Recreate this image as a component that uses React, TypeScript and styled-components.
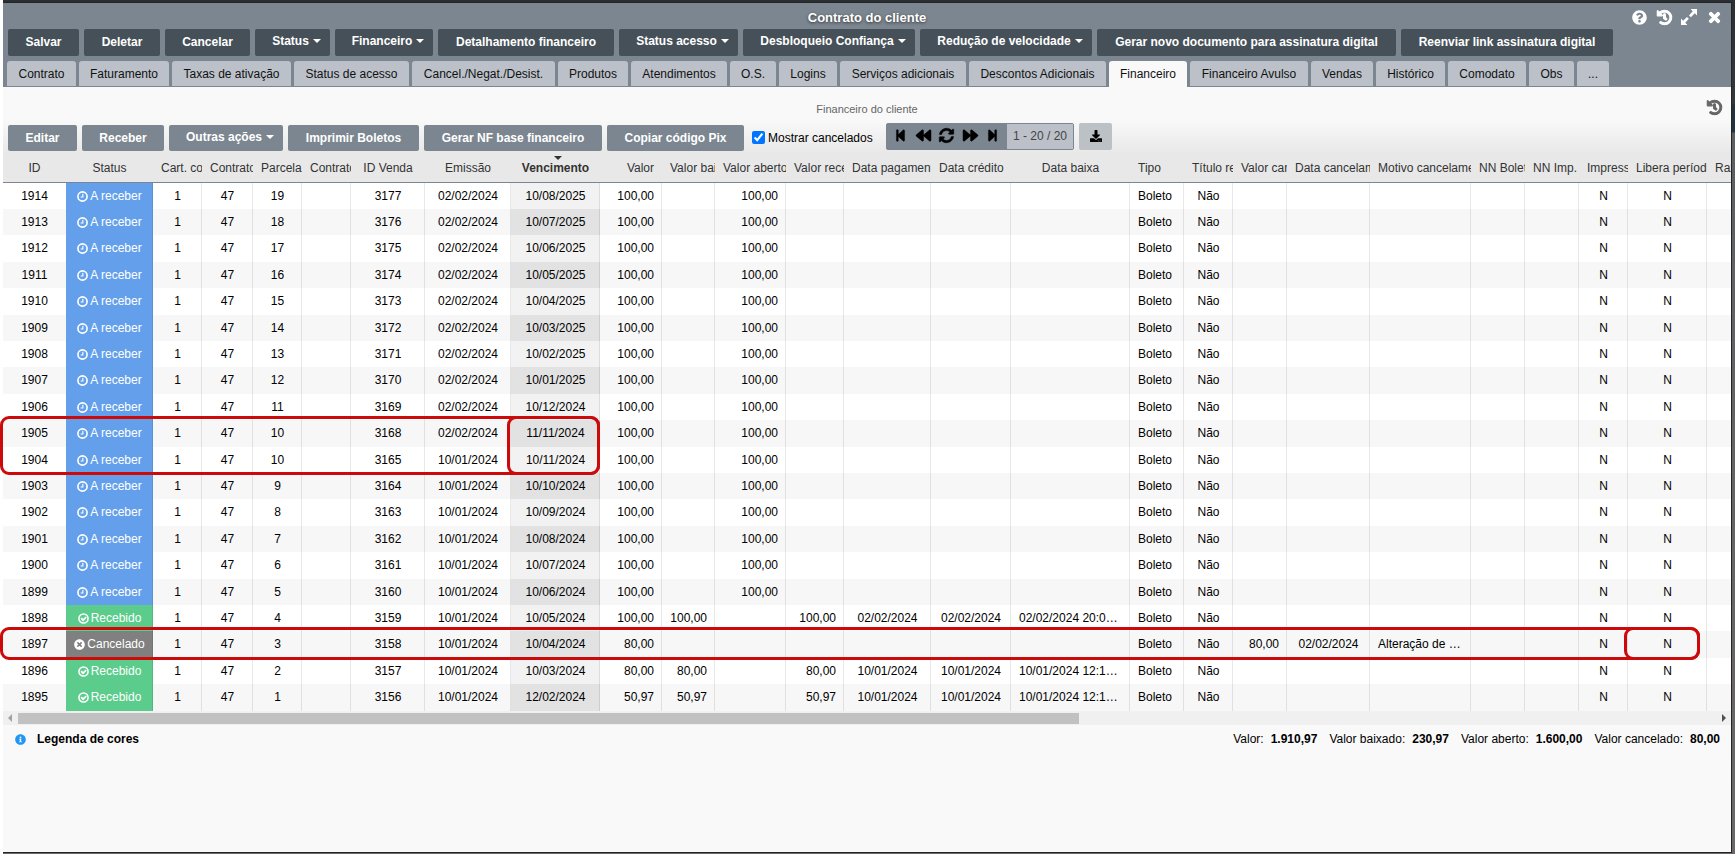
import React from "react";
import styled, { createGlobalStyle, css } from "styled-components";
import {
  FaQuestionCircle, FaHistory, FaTimes, FaStepBackward, FaBackward, FaSyncAlt,
  FaForward, FaStepForward, FaDownload, FaInfoCircle, FaTimesCircle,
} from "react-icons/fa";

const GlobalStyle = createGlobalStyle`
  * { box-sizing: border-box; }
  html, body, #root { height: 100%; }
  body {
    margin: 0;
    font: 12px/16px "Liberation Sans", Arial, sans-serif;
    color: #000;
  }
  button { font: inherit; border: 0; cursor: pointer; }
`;

const Desktop = styled.div`
  min-height: 100%;
  display: flex;
  border-left: 3px solid #fff;
  padding: 2px 3px 1px 0;
  background: linear-gradient(#2b2f32, #34383b 104px, #22333f 105px, #22333f 132px, #5c5f61 133px, #6a6866);
`;

const Win = styled.main`
  flex: 1;
  min-width: 0;
  display: flex;
  flex-direction: column;
  border: 1px solid #222426;
  border-left: 0;
  background: #f9f9f9;
`;

const WinHeader = styled.header`
  background: #7c8690;
`;

const TitleBar = styled.div`
  position: relative;
  height: 26px;
  padding-top: 2px;
  text-align: center;
`;

const Title = styled.h1`
  margin: 0;
  font-size: 13px;
  line-height: 25px;
  color: #fff;
  text-shadow: 0 1px 3px #333;
`;

const TitleTools = styled.div`
  position: absolute;
  top: 6px;
  right: 9px;
  display: flex;
  align-items: center;
  gap: 9px;
`;

const IconButton = styled.button`
  display: flex;
  padding: 0;
  background: none;
  color: inherit;
  font-size: 15px;
`;

const TitleIcon = styled(IconButton)<{ $heavy?: boolean }>`
  width: 16px;
  justify-content: center;
  color: #fff;
  ${(p) => p.$heavy && css`svg { overflow: visible; stroke: currentColor; stroke-width: 36; }`}
`;

const Actions = styled.div`
  display: flex;
  align-items: flex-start;
  gap: 5px;
  padding: 0 5px 5px;
`;

const ActionButton = styled.button<{ $w: number; $menu?: boolean; $light?: boolean }>`
  display: flex;
  flex: none;
  align-items: center;
  justify-content: center;
  gap: 4px;
  width: ${(p) => p.$w}px;
  height: ${(p) => (p.$light ? 26 : 27)}px;
  padding: 0 0 ${(p) => (p.$light ? 0 : 2) + (p.$menu ? 2 : 0)}px ${(p) => (p.$menu ? 8 : 0)}px;
  border-radius: 2px;
  background: ${(p) => (p.$light ? "#7c8690" : "#465059")};
  color: #fff;
  font-weight: bold;
  white-space: nowrap;
`;

const Caret = styled.span`
  border: 4px solid transparent;
  border-top-color: currentColor;
  border-bottom: 0;
`;

const Tabs = styled.nav`
  display: flex;
  gap: 3px;
  padding: 0 4px;
`;

const Tab = styled.button<{ $w: number; $active?: boolean }>`
  flex: none;
  width: ${(p) => p.$w}px;
  height: 26px;
  padding: 0;
  border-radius: 3px 3px 0 0;
  border-bottom: 1px solid ${(p) => (p.$active ? "#f9f9f9" : "#7c8690")};
  background: ${(p) => (p.$active ? "#f9f9f9" : "#bcc1c9")};
  color: #111;
  white-space: nowrap;
`;

const Panel = styled.section`
  display: flex;
  flex-direction: column;
`;

const PanelTop = styled.div`
  background: linear-gradient(#f9f9f9 32px, #e8e8e8 66px);
`;

const PanelTitle = styled.div`
  position: relative;
  height: 36px;
  padding-top: 14px;
  text-align: center;
`;

const PanelHeading = styled.h2`
  margin: 0;
  font-size: 11px;
  line-height: 16px;
  font-weight: normal;
  color: #666;
`;

const PanelHistory = styled(TitleIcon)`
  position: absolute;
  top: 13px;
  right: 9px;
  color: #666;
`;

const Toolbar = styled.div`
  display: flex;
  align-items: center;
  gap: 5px;
  height: 30px;
  padding: 0 5px;
`;

const CheckLabel = styled.label`
  display: flex;
  align-items: center;
  gap: 3px;
  width: 132px;
  padding: 0 0 1px 3px;
  input { width: 13px; height: 13px; margin: 0; accent-color: #0075ff; }
`;

const Pager = styled.div`
  display: flex;
  align-items: stretch;
  align-self: flex-start;
  width: 188px;
  height: 27px;
  border: 1px solid #7c8690;
  border-radius: 2px;
  background: #7c8690;
`;

const PagerButtons = styled.div`
  flex: 1;
  display: flex;
  align-items: center;
  justify-content: space-between;
  padding: 0 8px 2px 7px;
  svg { overflow: visible; stroke: currentColor; stroke-width: 16; }
`;

const StepButton = styled(IconButton)`
  font-size: 13px;
`;

const PagerCount = styled.span`
  width: 66px;
  background: #bcc1c9;
  color: #444;
  text-align: center;
  line-height: 25px;
`;

const DownloadButton = styled.button`
  display: flex;
  align-items: center;
  justify-content: center;
  align-self: flex-start;
  width: 33px;
  height: 27px;
  padding-bottom: 2px;
  border-radius: 2px;
  background: #bcc1c5;
`;

const Grid = styled.div`
  position: relative;
`;

const Viewport = styled.div`
  overflow: hidden;
`;

const Table = styled.table`
  width: 1781px;
  table-layout: fixed;
  border-collapse: separate;
  border-spacing: 0;
`;

const HeadCell = styled.th<{ $align: string; $sorted?: boolean }>`
  position: relative;
  height: 30px;
  padding: 0 8px;
  border-bottom: 1px solid #7c8690;
  background: #e8e8e8;
  overflow: hidden;
  white-space: nowrap;
  text-align: ${(p) => p.$align};
  font-weight: ${(p) => (p.$sorted ? "bold" : "normal")};
  color: #333;
`;

const SortMark = styled(Caret)`
  position: absolute;
  top: 3px;
  left: 48%;
`;

type Tone = "open" | "paid" | "cancelled";
const tones: Record<Tone, string> = { open: "#639fea", paid: "#5bcc8b", cancelled: "#808080" };

const Cell = styled.td<{ $align: string; $tone?: Tone; $sorted?: boolean; $plain?: boolean }>`
  padding: 5px 7px 0 8px;
  border-right: 1px solid rgba(0, 0, 0, ${(p) => (p.$plain ? 0 : 0.09)});
  overflow: hidden;
  text-overflow: ellipsis;
  vertical-align: top;
  white-space: nowrap;
  text-align: ${(p) => p.$align};
  ${(p) => p.$sorted && css`background: rgba(0, 0, 0, 0.05);`}
  ${(p) => p.$tone && css`background: ${tones[p.$tone]}; color: #fff;`}
`;

const Row = styled.tr`
  height: 26px;
  background: #fff;
  &:nth-child(5n + 3), &:nth-child(5n) { height: 27px; }
  &:nth-child(even) { background: #f7f7f7; }
  &:nth-child(even) ${Cell}[data-sorted] { background: #e2e2e2; }
`;

const StatusText = styled.span`
  display: flex;
  align-items: center;
  justify-content: center;
  gap: 2px;
  svg { flex: none; width: 11px; height: 11px; }
`;

const Scrollbar = styled.div`
  display: flex;
  align-items: center;
  height: 14px;
  padding: 0 5px;
  background: #f0f0f0;
`;

const ScrollArrow = styled.span<{ $dir: "left" | "right" }>`
  border: 4px solid transparent;
  ${(p) => p.$dir === "left"
    ? css`border-left: 0; border-right-color: #a3a3a3;`
    : css`border-right: 0; border-left-color: #505050;`}
`;

const ScrollTrack = styled.div`
  flex: 1;
  margin: 0 6px;
`;

const ScrollThumb = styled.div`
  width: 62.5%;
  height: 11px;
  background: #c1c1c1;
`;

const Highlight = styled.div<{ $x: number; $y: number; $w: number; $h: number }>`
  position: absolute;
  left: ${(p) => p.$x}px;
  top: ${(p) => p.$y}px;
  width: ${(p) => p.$w}px;
  height: ${(p) => p.$h}px;
  border: 3px solid #cd0a0a;
  border-radius: 9px;
  pointer-events: none;
`;

const Footer = styled.footer`
  display: flex;
  align-items: center;
  justify-content: space-between;
  padding: 6px 11px 0 12px;
`;

const Legend = styled.button`
  display: flex;
  align-items: center;
  gap: 11px;
  padding: 0;
  background: none;
  font-weight: bold;
  svg { color: #2196f3; font-size: 11px; }
`;

const Totals = styled.div`
  display: flex;
  gap: 12px;
`;

const Total = styled.span`
  display: flex;
  gap: 7px;
`;

const ClockIcon = () => (
  <svg viewBox="0 0 12 12" fill="none" stroke="currentColor" aria-hidden="true">
    <circle cx="6" cy="6" r="5" strokeWidth="1.8" />
    <path d="M6.4 3v3.6H4" strokeWidth="1.2" />
  </svg>
);

const CheckIcon = () => (
  <svg viewBox="0 0 12 12" fill="none" stroke="currentColor" aria-hidden="true">
    <circle cx="6" cy="6" r="5" strokeWidth="1.7" />
    <path d="M3.4 5.7l2.1 2.1 3.4-3.4" strokeWidth="1.9" />
  </svg>
);

const ExpandIcon = () => (
  <svg width="16" height="16" viewBox="0 0 15 15" fill="currentColor" aria-hidden="true">
    <path d="M9 0h6v6l-2-2-3.8 3.8-1.7-1.7L11 2z" />
    <path d="M6 15H0V9l2 2 3.6-3.6 1.8 1.8L4 13z" />
  </svg>
);

const actions: [string, number, boolean?][] = [
  ["Salvar", 71], ["Deletar", 76], ["Cancelar", 85], ["Status", 75, true],
  ["Financeiro", 98, true], ["Detalhamento financeiro", 176], ["Status acesso", 119, true],
  ["Desbloqueio Confiança", 172, true], ["Redução de velocidade", 172, true],
  ["Gerar novo documento para assinatura digital", 299], ["Reenviar link assinatura digital", 212],
];

const tabs: [string, number][] = [
  ["Contrato", 69], ["Faturamento", 90], ["Taxas de ativação", 119], ["Status de acesso", 115],
  ["Cancel./Negat./Desist.", 143], ["Produtos", 70], ["Atendimentos", 96], ["O.S.", 46],
  ["Logins", 58], ["Serviços adicionais", 126], ["Descontos Adicionais", 137], ["Financeiro", 78],
  ["Financeiro Avulso", 118], ["Vendas", 62], ["Histórico", 69], ["Comodato", 78], ["Obs", 45], ["...", 32],
];

const tools: [string, number, boolean?][] = [
  ["Editar", 69], ["Receber", 82], ["Outras ações", 114, true], ["Imprimir Boletos", 131],
  ["Gerar NF base financeiro", 178], ["Copiar código Pix", 137],
];

type Column = { label: string; w: number; align: "left" | "center" | "right" };
const col = (label: string, w: number, align: Column["align"] = "center"): Column => ({ label, w, align });

const columns: Column[] = [
  col("ID", 63), col("Status", 87), col("Cart. cobrança", 49), col("Contrato", 51), col("Parcela", 49),
  col("Contrato", 49), col("ID Venda", 74), col("Emissão", 86), col("Vencimento", 89),
  col("Valor", 62, "right"), col("Valor baixado", 53, "right"), col("Valor aberto", 71, "right"),
  col("Valor recebido", 58, "right"), col("Data pagamento", 87), col("Data crédito", 80),
  col("Data baixa", 119), col("Tipo", 54, "left"), col("Título renegociado", 49),
  col("Valor cancelado", 54, "right"), col("Data cancelamento", 83), col("Motivo cancelamento", 101, "left"),
  col("NN Boleto", 54), col("NN Imp.", 54), col("Impresso", 49), col("Libera período", 79), col("Razão", 77, "left"),
];
const SORTED = 8;

type Entry = {
  id: number; tone: Tone; parcela: number; venda: number; emissao: string; venc: string; valor: string;
  baixado?: string; aberto?: string; pago?: string; baixa?: string; cancelado?: string; dataCanc?: string; motivo?: string;
};

const open = (id: number, parcela: number, venda: number, emissao: string, venc: string): Entry =>
  ({ id, tone: "open", parcela, venda, emissao, venc, valor: "100,00", aberto: "100,00" });

const FEB = "02/02/2024";
const JAN = "10/01/2024";

const entries: Entry[] = [
  open(1914, 19, 3177, FEB, "10/08/2025"),
  open(1913, 18, 3176, FEB, "10/07/2025"),
  open(1912, 17, 3175, FEB, "10/06/2025"),
  open(1911, 16, 3174, FEB, "10/05/2025"),
  open(1910, 15, 3173, FEB, "10/04/2025"),
  open(1909, 14, 3172, FEB, "10/03/2025"),
  open(1908, 13, 3171, FEB, "10/02/2025"),
  open(1907, 12, 3170, FEB, "10/01/2025"),
  open(1906, 11, 3169, FEB, "10/12/2024"),
  open(1905, 10, 3168, FEB, "11/11/2024"),
  open(1904, 10, 3165, JAN, "10/11/2024"),
  open(1903, 9, 3164, JAN, "10/10/2024"),
  open(1902, 8, 3163, JAN, "10/09/2024"),
  open(1901, 7, 3162, JAN, "10/08/2024"),
  open(1900, 6, 3161, JAN, "10/07/2024"),
  open(1899, 5, 3160, JAN, "10/06/2024"),
  { id: 1898, tone: "paid", parcela: 4, venda: 3159, emissao: JAN, venc: "10/05/2024", valor: "100,00", baixado: "100,00", pago: FEB, baixa: "02/02/2024 20:03:11" },
  { id: 1897, tone: "cancelled", parcela: 3, venda: 3158, emissao: JAN, venc: "10/04/2024", valor: "80,00", cancelado: "80,00", dataCanc: FEB, motivo: "Alteração de contrato" },
  { id: 1896, tone: "paid", parcela: 2, venda: 3157, emissao: JAN, venc: "10/03/2024", valor: "80,00", baixado: "80,00", pago: JAN, baixa: "10/01/2024 12:14:20" },
  { id: 1895, tone: "paid", parcela: 1, venda: 3156, emissao: JAN, venc: "12/02/2024", valor: "50,97", baixado: "50,97", pago: JAN, baixa: "10/01/2024 12:14:20" },
];

const statusView: Record<Tone, React.ReactNode> = {
  open: <StatusText><ClockIcon />A receber</StatusText>,
  paid: <StatusText><CheckIcon />Recebido</StatusText>,
  cancelled: <StatusText><FaTimesCircle />Cancelado</StatusText>,
};

const cellsOf = (e: Entry): React.ReactNode[] => [
  e.id, statusView[e.tone], 1, 47, e.parcela, "", e.venda, e.emissao, e.venc, e.valor,
  e.baixado, e.aberto, e.baixado, e.pago, e.pago, e.baixa, "Boleto", "Não",
  e.cancelado, e.dataCanc, e.motivo, "", "", "N", "N", "",
];

const totals = [
  ["Valor:", "1.910,97"], ["Valor baixado:", "230,97"], ["Valor aberto:", "1.600,00"], ["Valor cancelado:", "80,00"],
];

export default function App() {
  return (
    <>
      <GlobalStyle />
      <Desktop>
        <Win>
          <WinHeader>
            <TitleBar>
              <Title>Contrato do cliente</Title>
              <TitleTools>
                <TitleIcon aria-label="Ajuda"><FaQuestionCircle /></TitleIcon>
                <TitleIcon aria-label="Histórico" $heavy><FaHistory /></TitleIcon>
                <TitleIcon aria-label="Expandir"><ExpandIcon /></TitleIcon>
                <TitleIcon aria-label="Fechar" $heavy><FaTimes /></TitleIcon>
              </TitleTools>
            </TitleBar>
            <Actions>
              {actions.map(([label, w, menu]) => (
                <ActionButton key={label} $w={w} $menu={menu}>{label}{menu && <Caret />}</ActionButton>
              ))}
            </Actions>
            <Tabs>
              {tabs.map(([label, w], i) => (
                <Tab key={label} $w={w} $active={i === 11}>{label}</Tab>
              ))}
            </Tabs>
          </WinHeader>
          <Panel>
            <PanelTop>
              <PanelTitle>
                <PanelHeading>Financeiro do cliente</PanelHeading>
                <PanelHistory aria-label="Histórico do financeiro" $heavy><FaHistory /></PanelHistory>
              </PanelTitle>
              <Toolbar>
                {tools.map(([label, w, menu]) => (
                  <ActionButton key={label} $w={w} $menu={menu} $light>{label}{menu && <Caret />}</ActionButton>
                ))}
                <CheckLabel><input type="checkbox" defaultChecked />Mostrar cancelados</CheckLabel>
                <Pager>
                  <PagerButtons>
                    <StepButton aria-label="Primeira"><FaStepBackward /></StepButton>
                    <IconButton aria-label="Anterior"><FaBackward /></IconButton>
                    <IconButton aria-label="Atualizar"><FaSyncAlt /></IconButton>
                    <IconButton aria-label="Próxima"><FaForward /></IconButton>
                    <StepButton aria-label="Última"><FaStepForward /></StepButton>
                  </PagerButtons>
                  <PagerCount>1 - 20 / 20</PagerCount>
                </Pager>
                <DownloadButton aria-label="Baixar"><FaDownload /></DownloadButton>
              </Toolbar>
            </PanelTop>
            <Grid>
              <Viewport>
                <Table>
                  <colgroup>{columns.map((c, i) => <col key={i} width={c.w} />)}</colgroup>
                  <thead>
                    <tr>
                      {columns.map((c, i) => (
                        <HeadCell key={i} $align={c.align} $sorted={i === SORTED}>
                          {i === SORTED && <SortMark />}{c.label}
                        </HeadCell>
                      ))}
                    </tr>
                  </thead>
                  <tbody>
                    {entries.map((e) => (
                      <Row key={e.id}>
                        {cellsOf(e).map((value, i) => (
                          <Cell
                            key={i}
                            $align={columns[i].align}
                            $tone={i === 1 ? e.tone : undefined}
                            $sorted={i === SORTED}
                            $plain={i === 0}
                            data-sorted={i === SORTED ? "" : undefined}
                          >{value}</Cell>
                        ))}
                      </Row>
                    ))}
                  </tbody>
                </Table>
              </Viewport>
              <Highlight $x={-3} $y={263} $w={600} $h={59} />
              <Highlight $x={504} $y={263} $w={93} $h={59} />
              <Highlight $x={-3} $y={474} $w={1700} $h={33} />
              <Highlight $x={1621} $y={474} $w={76} $h={33} />
              <Scrollbar>
                <ScrollArrow $dir="left" />
                <ScrollTrack><ScrollThumb /></ScrollTrack>
                <ScrollArrow $dir="right" />
              </Scrollbar>
            </Grid>
            <Footer>
              <Legend><FaInfoCircle />Legenda de cores</Legend>
              <Totals>
                {totals.map(([k, v]) => <Total key={k}>{k}<b>{v}</b></Total>)}
              </Totals>
            </Footer>
          </Panel>
        </Win>
      </Desktop>
    </>
  );
}
